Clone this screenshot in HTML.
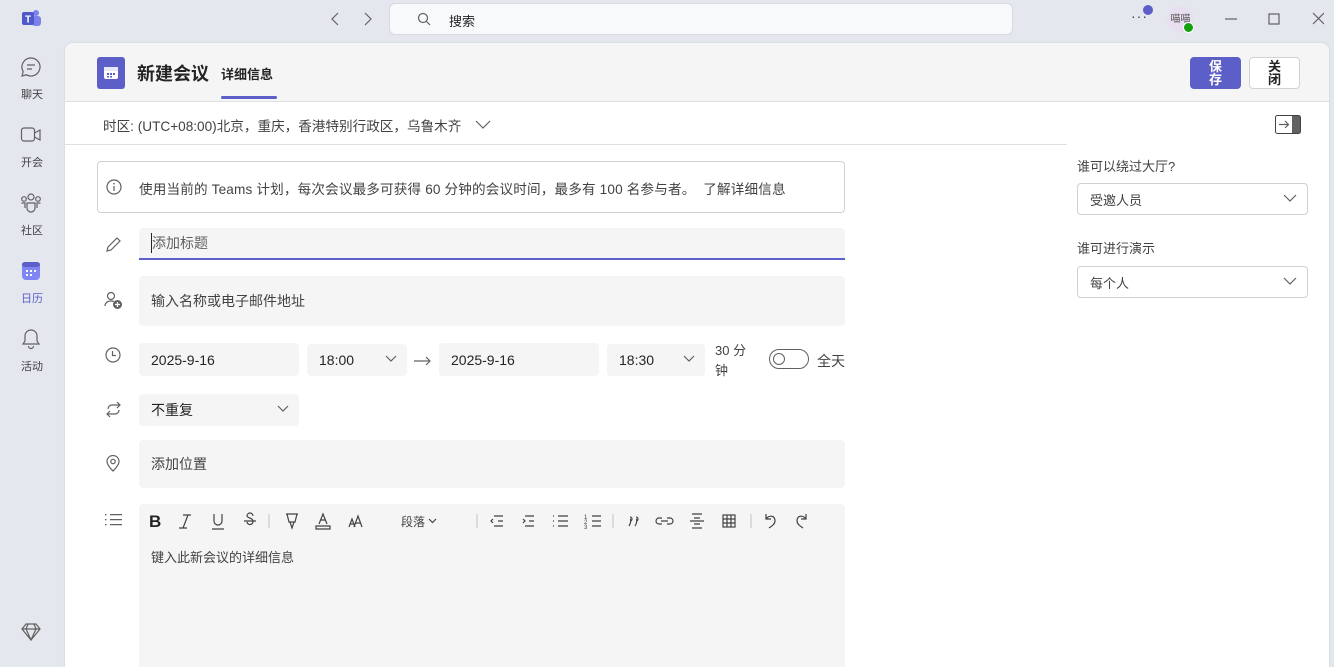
<!DOCTYPE html>
<html><head><meta charset="utf-8"><style>
*{margin:0;padding:0;box-sizing:border-box}
body{width:1334px;height:667px;overflow:hidden;background:#e4e7ee;font-family:"Liberation Sans","Noto Sans CJK SC",sans-serif;color:#242424;position:relative;font-size:14px}
.a{position:absolute}
.rail{font-size:11px;color:#424242;text-align:center;width:64px;left:0}
.panel{left:65px;top:43px;width:1264px;height:624px;background:#fff;border-radius:8px 8px 0 0;overflow:hidden;box-shadow:0 0 2px rgba(0,0,0,.12)}
.hdr{left:0;top:0;width:1264px;height:59px;background:#f5f5f5;border-bottom:1px solid #e0e0e0}
.f{background:#f5f5f5;border-radius:4px;font-size:14px;color:#242424;padding-left:12px;display:flex;align-items:center}
.ic{stroke:#616161;fill:none;stroke-width:1.2}
.dd{position:absolute;right:10px;top:50%;margin-top:-5px}
</style></head><body>
<svg class="a" style="left:21px;top:9px" width="22" height="20" viewBox="0 0 22 20"><circle cx="15" cy="4" r="3" fill="#7b83eb"/><rect x="11" y="7" width="9" height="10" rx="3" fill="#7b83eb"/><rect x="1" y="3" width="12" height="13" rx="2" fill="#5059c9"/><text x="4" y="13.5" font-size="10" font-weight="bold" fill="#fff" font-family="Liberation Sans">T</text></svg>
<svg class="a" style="left:328px;top:12px" width="50" height="14"><path d="M10 1 4 7l6 6" class="ic" stroke="#424242"/><path d="M37 1l6 6-6 6" class="ic" stroke="#bbb"/></svg>
<div class="a" style="left:389px;top:3px;width:624px;height:32px;background:#f8f9fb;border:1px solid #d6d9e0;border-radius:6px"></div>
<svg class="a" style="left:417px;top:12px" width="14" height="14"><circle cx="6" cy="6" r="4.5" class="ic" stroke="#424242"/><path d="M9.5 9.5 13 13" class="ic" stroke="#424242"/></svg>
<div class="a" style="left:449px;top:11px;font-size:13px">搜索</div>
<div class="a" style="left:1131px;top:8px;font-size:14px;color:#424242;letter-spacing:1px">···</div>
<div class="a" style="left:1143px;top:5px;width:10px;height:10px;border-radius:50%;background:#5b5fc7"></div>
<div class="a" style="left:1167px;top:6px;width:27px;height:27px;border-radius:50%;background:#e8e0f0;font-size:10px;color:#555;text-align:center;line-height:27px">喵喵</div>
<div class="a" style="left:1183px;top:22px;width:11px;height:11px;border-radius:50%;background:#13a10e;border:1.5px solid #fff"></div>
<svg class="a" style="left:1224px;top:12px" width="100" height="14"><path d="M1 7h12" class="ic" stroke="#424242"/><rect x="45" y="2" width="10" height="10" class="ic" stroke="#424242"/><path d="M89 1l11 11M100 1 89 12" class="ic" stroke="#424242"/></svg>
<svg class="a" style="left:20px;top:56px" width="22" height="22"><path d="M11 2a9 9 0 1 1-4.5 16.8L2 20l1.2-4.4A9 9 0 0 1 11 2z" class="ic" stroke="#424242" stroke-width="1.4"/><path d="M7 9h8M7 13h5" class="ic" stroke="#424242" stroke-width="1.4"/></svg>
<div class="a rail" style="top:86px">聊天</div>
<svg class="a" style="left:20px;top:126px" width="22" height="18"><rect x="1.5" y="2" width="13" height="13" rx="2.5" class="ic" stroke="#424242" stroke-width="1.4"/><path d="M14.5 7 20 4v10l-5.5-3" class="ic" stroke="#424242" stroke-width="1.4"/></svg>
<div class="a rail" style="top:154px">开会</div>
<svg class="a" style="left:20px;top:192px" width="22" height="22"><circle cx="11" cy="5" r="3" class="ic" stroke="#424242" stroke-width="1.4"/><circle cx="4" cy="7" r="2.3" class="ic" stroke="#424242" stroke-width="1.4"/><circle cx="18" cy="7" r="2.3" class="ic" stroke="#424242" stroke-width="1.4"/><path d="M7 11h8v5a4 4 0 0 1-8 0zM1.5 11H5v5M20.5 11H17v5" class="ic" stroke="#424242" stroke-width="1.4"/></svg>
<div class="a rail" style="top:222px">社区</div>
<svg class="a" style="left:21px;top:261px" width="20" height="20"><rect x="1" y="1" width="18" height="18" rx="4" fill="#7f85f5"/><rect x="1" y="1" width="18" height="5" rx="3" fill="#5b5fc7"/><g fill="#fff"><rect x="5" y="9" width="2" height="2"/><rect x="9" y="9" width="2" height="2"/><rect x="13" y="9" width="2" height="2"/><rect x="5" y="13" width="2" height="2"/><rect x="9" y="13" width="2" height="2"/></g></svg>
<div class="a rail" style="top:290px;color:#5b5fc7">日历</div>
<svg class="a" style="left:21px;top:328px" width="20" height="22"><path d="M10 2a6 6 0 0 1 6 6v5l2 3H2l2-3V8a6 6 0 0 1 6-6zM7.5 18a2.5 2.5 0 0 0 5 0" class="ic" stroke="#424242" stroke-width="1.4"/></svg>
<div class="a rail" style="top:358px">活动</div>
<svg class="a" style="left:21px;top:623px" width="20" height="18"><path d="M5 1h10l4 5-9 11L1 6z M1 6h18M7 1 5 6l5 11 5-11-2-5" class="ic" stroke="#5b5fc7" stroke-width="1.3"/></svg>
<div class="a panel">
 <div class="a hdr"></div>
 <div class="a" style="left:32px;top:14px;width:28px;height:32px;background:#5b5fc7;border-radius:3px"></div>
 <svg class="a" style="left:38px;top:22px" width="16" height="16"><rect x="1" y="2" width="14" height="12" rx="2" fill="#fff"/><rect x="1" y="2" width="14" height="4" fill="#e8e8f8"/><g fill="#5b5fc7"><rect x="4" y="8" width="2" height="2"/><rect x="7" y="8" width="2" height="2"/><rect x="10" y="8" width="2" height="2"/><rect x="4" y="11" width="2" height="1.5"/><rect x="7" y="11" width="2" height="1.5"/></g></svg>
 <div class="a" style="left:72px;top:17px;font-size:18px;font-weight:bold">新建会议</div>
 <div class="a" style="left:156px;top:21px;font-size:13px;font-weight:bold">详细信息</div>
 <div class="a" style="left:156px;top:53px;width:56px;height:3px;background:#5b5fc7;border-radius:2px"></div>
 <div class="a" style="left:1125px;top:14px;width:51px;height:32px;background:#5b5fc7;border-radius:4px;color:#fff;font-size:13px;font-weight:bold;text-align:center;line-height:13px;padding-top:3px">保<br>存</div>
 <div class="a" style="left:1184px;top:14px;width:51px;height:32px;background:#fff;border:1px solid #d1d1d1;border-radius:4px;font-size:13px;font-weight:bold;text-align:center;line-height:13px;padding-top:2px">关<br>闭</div>
 <div class="a" style="left:38px;top:72px;font-size:13.6px;color:#424242;white-space:nowrap">时区: (UTC+08:00)北京，重庆，香港特别行政区，乌鲁木齐</div>
 <svg class="a" style="left:410px;top:77px" width="16" height="10"><path d="M1 1l7 7 7-7" class="ic" stroke="#424242"/></svg>
 <div class="a" style="left:0;top:101px;width:1002px;height:1px;background:#e0e0e0"></div>
 <svg class="a" style="left:1210px;top:72px" width="26" height="19"><rect x="0.5" y="0.5" width="25" height="18" rx="2" fill="#fff" stroke="#424242"/><rect x="17" y="1" width="8" height="17" fill="#616161"/><path d="M4 9.5h9M10 6l3.5 3.5L10 13" class="ic" stroke="#424242" stroke-width="1.4"/></svg>
 <div class="a" style="left:32px;top:118px;width:748px;height:52px;border:1px solid #d1d1d1;border-radius:4px"></div>
 <svg class="a" style="left:41px;top:136px" width="16" height="16"><circle cx="8" cy="8" r="7" class="ic"/><path d="M8 7v5" class="ic"/><circle cx="8" cy="4.7" r=".8" fill="#616161"/></svg>
 <div class="a" style="left:74px;top:135px;font-size:13.6px;color:#424242;white-space:nowrap;letter-spacing:0.15px">使用当前的 Teams 计划，每次会议最多可获得 60 分钟的会议时间，最多有 100 名参与者。&nbsp;&nbsp;了解详细信息</div>
 <svg class="a" style="left:40px;top:193px" width="17" height="17"><path d="M12 2l3 3-9 9-4 1 1-4z" class="ic"/></svg>
 <div class="a f" style="left:74px;top:185px;width:706px;height:32px;border-bottom:2px solid #5b5fc7;border-radius:4px 4px 0 0;color:#616161"><span style="border-left:1px solid #242424;padding-left:0">添加标题</span></div>
 <svg class="a" style="left:39px;top:248px" width="20" height="20"><circle cx="7" cy="5" r="3.5" class="ic"/><path d="M1 15c0-3 2.5-5 6-5 1.2 0 2 .2 3 .6" class="ic"/><circle cx="13.5" cy="13.5" r="4.5" fill="#616161"/><path d="M13.5 11v5M11 13.5h5" stroke="#fff" stroke-width="1.2"/></svg>
 <div class="a f" style="left:74px;top:233px;width:706px;height:50px;color:#424242">输入名称或电子邮件地址</div>
 <svg class="a" style="left:40px;top:304px" width="16" height="16"><circle cx="8" cy="8" r="7" class="ic"/><path d="M7.5 4v4.5H11" class="ic"/></svg>
 <div class="a f" style="left:74px;top:300px;width:160px;height:33px">2025-9-16</div>
 <div class="a f" style="left:242px;top:301px;width:100px;height:32px">18:00<svg class="dd" width="12" height="8"><path d="M1 1l5 5 5-5" class="ic" stroke="#424242"/></svg></div>
 <svg class="a" style="left:349px;top:313px" width="18" height="10"><path d="M0 5h16M12 1l4 4-4 4" class="ic"/></svg>
 <div class="a f" style="left:374px;top:300px;width:160px;height:33px">2025-9-16</div>
 <div class="a f" style="left:542px;top:301px;width:98px;height:32px">18:30<svg class="dd" width="12" height="8"><path d="M1 1l5 5 5-5" class="ic" stroke="#424242"/></svg></div>
 <div class="a" style="left:650px;top:298px;font-size:13px;color:#424242;line-height:20px;width:40px">30 分<br>钟</div>
 <div class="a" style="left:704px;top:306px;width:40px;height:20px;border:1px solid #616161;border-radius:10px"></div>
 <div class="a" style="left:708px;top:310px;width:12px;height:12px;border:1.2px solid #616161;border-radius:50%"></div>
 <div class="a" style="left:752px;top:308px;font-size:14px;color:#424242">全天</div>
 <svg class="a" style="left:40px;top:358px" width="17" height="17"><path d="M3 8a4 4 0 0 1 4-4h8M12 1l3 3-3 3M14 9a4 4 0 0 1-4 4H2M5 16l-3-3 3-3" class="ic"/></svg>
 <div class="a f" style="left:74px;top:351px;width:160px;height:32px">不重复<svg class="dd" width="12" height="8"><path d="M1 1l5 5 5-5" class="ic" stroke="#424242"/></svg></div>
 <svg class="a" style="left:41px;top:412px" width="14" height="18"><path d="M7 16s6-5.5 6-9.5a6 6 0 0 0-12 0C1 10.5 7 16 7 16z" class="ic"/><circle cx="7" cy="6.5" r="2.2" class="ic"/></svg>
 <div class="a f" style="left:74px;top:397px;width:706px;height:48px;color:#424242">添加位置</div>
 <svg class="a" style="left:40px;top:470px" width="18" height="14"><g fill="#616161"><rect x="0" y="1" width="1.5" height="1.3"/><rect x="0" y="6" width="1.5" height="1.3"/><rect x="0" y="11" width="1.5" height="1.3"/></g><path d="M5 1.6h12M5 6.6h12M5 11.6h12" class="ic"/></svg>
 <div class="a" style="left:74px;top:461px;width:706px;height:170px;background:#f5f5f5;border-radius:4px"></div>
 <svg class="a" style="left:80px;top:467px" width="700" height="22" font-family="Liberation Sans" fill="none" stroke="#424242" stroke-width="1.2">
  <text x="4" y="17" font-size="17" font-weight="bold" fill="#242424" stroke="none">B</text>
  <path d="M38 5h8M34 18h8M43 5l-5 13"/>
  <g transform="translate(1 0)"><path d="M68 4v7a4 4 0 0 0 8 0V4M66 19h12"/></g>
  <g transform="translate(3 0)"><path d="M105 6a3 3 0 0 0-6 0c0 2 6 2 6 5a3 3 0 0 1-6 1M96 11h12"/></g>
  <path d="M124 4v14" stroke="#ccc"/>
  <g transform="translate(7 0)"><path d="M134 4h12M135 4l2 8h6l2-8M138 12l2 6 2-6"/></g>
  <g transform="translate(12 0)"><path d="M162 14l4-10 4 10M163.5 10h5M159 16h14v3h-14z"/></g>
  <g transform="translate(16 0)"><path d="M188 17l3-8 3 8M193 17l4-11 4 11M195 13h5M189.5 14h3"/></g>
  <text x="256" y="16" font-size="12" fill="#424242" stroke="none" font-family="Noto Sans CJK SC">段落</text>
  <path d="M284 9l3.5 3.5 3.5-3.5"/>
  <path d="M332 4v14" stroke="#ccc"/>
  <g transform="translate(19 0)"><path d="M330 6h9M334 11h5M330 16h9M329 9l-2 2 2 2"/></g>
  <g transform="translate(18 0)"><path d="M362 6h9M366 11h5M362 16h9M360 9l2 2-2 2"/></g>
  <g transform="translate(16 0)"><path d="M397 6h10M397 11h10M397 16h10M392 6h1M392 11h1M392 16h1"/></g>
  <g transform="translate(17 0)"><path d="M430 6h9M430 11h9M430 16h9"/><text x="422" y="9" font-size="6" fill="#424242" stroke="none">1</text><text x="422" y="14" font-size="6" fill="#424242" stroke="none">2</text><text x="422" y="19" font-size="6" fill="#424242" stroke="none">3</text></g>
  <path d="M468 4v14" stroke="#ccc"/>
  <g transform="translate(24 0)"><path d="M461 7a2 2 0 1 1 0 4M461 9c1 0 1.5 3-1 7M467 7a2 2 0 1 1 0 4M467 9c1 0 1.5 3-1 7"/></g>
  <g transform="translate(23 0)"><path d="M494 8h-3a3 3 0 0 0 0 6h3M499 8h3a3 3 0 0 1 0 6h-3M493 11h7"/></g>
  <g transform="translate(20 0)"><path d="M527 4h10M529 8h6M525 11h14M529 14h6M527 18h10"/></g>
  <g transform="translate(21 0)"><rect x="557" y="5" width="12" height="12"/><path d="M557 9h12M557 13h12M561 5v12M565 5v12"/></g>
  <path d="M606 4v14" stroke="#ccc"/>
  <g transform="translate(29 0)"><path d="M592 4v5h5M592 9c3-4 9-4 9 2 0 3-3 5-6 7"/></g>
  <g transform="translate(35 0)"><path d="M626 4v5h-5M626 9c-3-4-9-4-9 2 0 3 3 5 6 7"/></g>
 </svg>
 <div class="a" style="left:86px;top:504px;font-size:13px;color:#424242">键入此新会议的详细信息</div>
 <div class="a" style="left:1012px;top:113px;font-size:13px;color:#424242">谁可以绕过大厅?</div>
 <div class="a f" style="left:1012px;top:140px;width:231px;height:32px;background:#fff;border:1px solid #d1d1d1;font-size:13px;color:#424242">受邀人员<svg class="dd" width="14" height="8"><path d="M1 1l6 6 6-6" class="ic" stroke="#424242"/></svg></div>
 <div class="a" style="left:1012px;top:195px;font-size:13px;color:#424242">谁可进行演示</div>
 <div class="a f" style="left:1012px;top:223px;width:231px;height:32px;background:#fff;border:1px solid #d1d1d1;font-size:13px;color:#424242">每个人<svg class="dd" width="14" height="8"><path d="M1 1l6 6 6-6" class="ic" stroke="#424242"/></svg></div>
</div>
</body></html>
